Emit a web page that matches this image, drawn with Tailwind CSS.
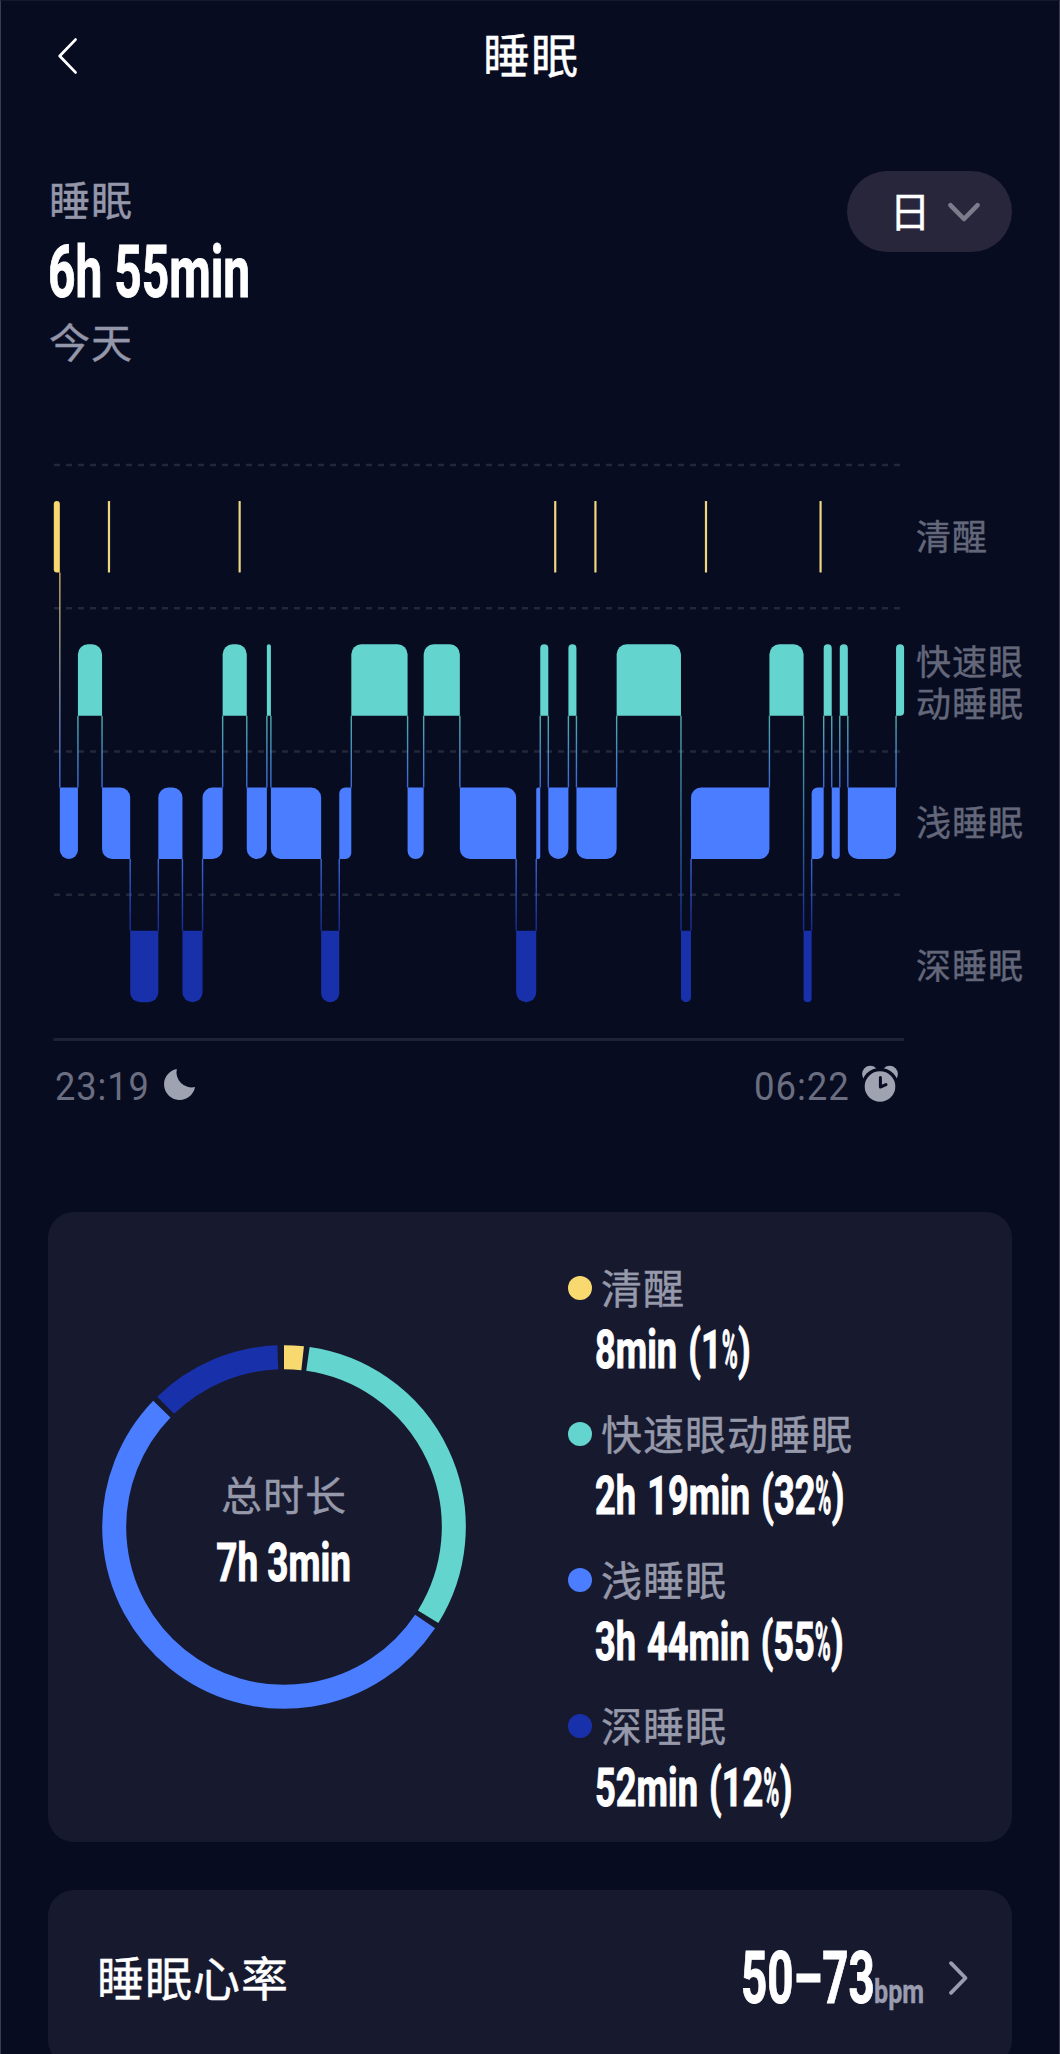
<!DOCTYPE html>
<html lang="zh-CN">
<head>
<meta charset="utf-8">
<title>睡眠</title>
<script src="https://cdn.jsdelivr.net/npm/@tailwindcss/browser@4"></script>
</head>
<body class="bg-[#070c21]">
<div class="w-[1060px] h-[2054px] overflow-hidden flex flex-col bg-[#070c21] border-x border-t border-x-[#3a3d50] border-t-[#141a2e] text-white font-['Noto_Sans_CJK_SC',sans-serif] [-webkit-text-stroke:0.4px]">

  <header class="h-[110px] shrink-0 grid grid-cols-[1fr_auto_1fr] items-center pl-[54px] pr-[52px]">
    <svg class="w-[26px] h-[42px]" viewBox="0 0 26 42" fill="none" stroke="#fff" stroke-width="2.8" stroke-linecap="round" stroke-linejoin="round"><path d="M20.5 4.6 4.7 21 20.5 37.4"/></svg>
    <h1 class="mb-[6px] text-[47px] leading-[60px] tracking-[1px]">睡眠</h1>
  </header>

  <section class="mt-[58px] pl-[48px] pr-[47px] h-[202px] shrink-0 flex justify-between items-start">
    <div class="flex flex-col">
      <div class="h-[60px] text-[41px] leading-[58px] tracking-[1px] text-[#9497a9]">睡眠</div>
      <div class="-ml-[1px] h-[82px] text-[71.5px] leading-[88px] font-bold font-['Roboto',sans-serif] whitespace-nowrap origin-left scale-x-[0.67] [-webkit-text-stroke:1px]">6h 55min</div>
      <div class="h-[60px] text-[41px] leading-[59px] tracking-[1px] text-[#9497a9]">今天</div>
    </div>
    <button class="mt-[2px] w-[165px] h-[81px] rounded-full bg-[#27263a] flex items-center pl-[42px] gap-[16px]">
      <span class="mb-[5px] text-[41px] leading-[60px] w-[42px]">日</span>
      <svg class="w-[34px] h-[22px]" viewBox="0 0 34 22" fill="none" stroke="#7d7c8c" stroke-width="4.6" stroke-linecap="round" stroke-linejoin="round"><path d="M3.4 4.2 17 18 30.6 4.2"/></svg>
    </button>
  </section>

  <section class="mt-[89px] pl-[52px] flex h-[582px] shrink-0">
    <svg id="stages" class="w-[852px] h-[582px] shrink-0" viewBox="0 0 852 582"></svg>
    <div class="ml-[11px] mt-[3px] h-[573px] grid grid-rows-4 items-center text-[35px] leading-[42px] tracking-[1px] text-[#636779]">
      <div>清醒</div>
      <div class="mt-[6px]">快速眼<br>动睡眠</div>
      <div>浅睡眠</div>
      <div>深睡眠</div>
    </div>
  </section>

  <section class="mt-[18px] ml-[54px] w-[845px] h-[52px] shrink-0 flex items-center justify-between text-[38.5px] leading-[52px] tracking-[1px] text-[#6b6e80] font-['Roboto',sans-serif] [-webkit-text-stroke:0px]">
    <div class="flex items-center gap-[13px]">
      <span class="w-[95px] pt-[2px] origin-left scale-x-[0.94]">23:19</span>
      <svg class="mb-[2px] w-[34px] h-[34px]" viewBox="0 0 34 34" fill="#9fa2b1"><path d="M13.8 1A15.6 15.6 0 1 0 32 19 15.2 15.2 0 0 1 13.8 1Z"/></svg>
    </div>
    <div class="flex items-center gap-[5px]">
      <span class="w-[101px] pt-[2px] origin-left scale-x-[0.95]">06:22</span>
      <svg class="mb-[4px] w-[40px] h-[40px]" viewBox="0 0 40 40">
        <circle cx="10.3" cy="10" r="8.2" fill="#9fa2b1"/><circle cx="29.7" cy="10" r="8.2" fill="#9fa2b1"/>
        <circle cx="20" cy="22.5" r="18.6" fill="#070c21"/><circle cx="20" cy="22.5" r="15.3" fill="#9fa2b1"/>
        <path d="M20.4 13.5V23L26 20.6" fill="none" stroke="#070c21" stroke-width="3" stroke-linecap="round" stroke-linejoin="round"/>
      </svg>
    </div>
  </section>

  <section class="mt-[100px] ml-[47px] w-[964px] h-[630px] shrink-0 rounded-[26px] bg-[#171a2f] flex">
    <div class="w-[520px] grid place-items-start">
      <svg id="ring" class="col-start-1 row-start-1 ml-[52px] mt-[131px] w-[368px] h-[368px]" viewBox="-184 -184 368 368" fill="none" stroke-width="24"></svg>
      <div class="col-start-1 row-start-1 ml-[52px] mt-[253px] w-[368px] flex flex-col items-center">
        <div class="h-[60px] text-[41px] leading-[57px] tracking-[1px] text-[#9699aa]">总时长</div>
        <div class="mt-[6px] h-[60px] text-[53.5px] leading-[64px] font-bold font-['Roboto',sans-serif] whitespace-nowrap scale-x-[0.69] [-webkit-text-stroke:1px]">7h 3min</div>
      </div>
    </div>
    <ul class="pt-[46px]">
      <li class="h-[146px]">
        <div class="flex items-center gap-[9px]"><i class="size-[24px] rounded-full bg-[#f8d970]"></i><span class="h-[60px] text-[41px] leading-[57px] tracking-[1px] text-[#9699aa]">清醒</span></div>
        <div class="ml-[27px] h-[60px] text-[53.5px] leading-[64px] font-bold font-['Roboto',sans-serif] whitespace-nowrap w-[200px] origin-left scale-x-[0.678] [word-spacing:3px] [-webkit-text-stroke:1px]">8min (1<span class="inline-block origin-left scale-x-[0.6] -mr-[15.5px]">%</span>)</div>
      </li>
      <li class="h-[146px]">
        <div class="flex items-center gap-[9px]"><i class="size-[24px] rounded-full bg-[#63d5ce]"></i><span class="h-[60px] text-[41px] leading-[57px] tracking-[1px] text-[#9699aa]">快速眼动睡眠</span></div>
        <div class="ml-[27px] h-[60px] text-[53.5px] leading-[64px] font-bold font-['Roboto',sans-serif] whitespace-nowrap w-[200px] origin-left scale-x-[0.678] [word-spacing:3px] [-webkit-text-stroke:1px]">2h 19min (32<span class="inline-block origin-left scale-x-[0.6] -mr-[15.5px]">%</span>)</div>
      </li>
      <li class="h-[146px]">
        <div class="flex items-center gap-[9px]"><i class="size-[24px] rounded-full bg-[#4a7dff]"></i><span class="h-[60px] text-[41px] leading-[57px] tracking-[1px] text-[#9699aa]">浅睡眠</span></div>
        <div class="ml-[27px] h-[60px] text-[53.5px] leading-[64px] font-bold font-['Roboto',sans-serif] whitespace-nowrap w-[200px] origin-left scale-x-[0.676] [word-spacing:3px] [-webkit-text-stroke:1px]">3h 44min (55<span class="inline-block origin-left scale-x-[0.6] -mr-[15.5px]">%</span>)</div>
      </li>
      <li class="h-[146px]">
        <div class="flex items-center gap-[9px]"><i class="size-[24px] rounded-full bg-[#1831ab]"></i><span class="h-[60px] text-[41px] leading-[57px] tracking-[1px] text-[#9699aa]">深睡眠</span></div>
        <div class="ml-[27px] h-[60px] text-[53.5px] leading-[64px] font-bold font-['Roboto',sans-serif] whitespace-nowrap w-[200px] origin-left scale-x-[0.678] [word-spacing:3px] [-webkit-text-stroke:1px]">52min (12<span class="inline-block origin-left scale-x-[0.6] -mr-[15.5px]">%</span>)</div>
      </li>
    </ul>
  </section>

  <section class="mt-[48px] ml-[47px] w-[964px] h-[176px] shrink-0 rounded-[26px] bg-[#171a2f] flex items-center pl-[49px]">
    <div class="mb-[4px] shrink-0 text-[47px] leading-[60px] tracking-[1px] w-[644px]">睡眠心率</div>
    <div class="mt-[2px] shrink-0 w-[133px] text-[71.5px] leading-[84px] font-bold font-['Roboto',sans-serif] whitespace-nowrap [-webkit-text-stroke:1px]"><div class="origin-left scale-x-[0.64]">50–73</div></div>
    <div class="mt-[26px] shrink-0 w-[73px] text-[34px] leading-[40px] font-bold text-[#9a9db0] font-['Roboto',sans-serif]"><div class="origin-left scale-x-[0.74]">bpm</div></div>
    <svg class="shrink-0 w-[24px] h-[38px]" viewBox="0 0 24 38" fill="none" stroke="#9a9db0" stroke-width="3.8" stroke-linecap="round" stroke-linejoin="round"><path d="M4 4.2 18.5 19 4 33.8"/></svg>
  </section>
</div>

<script>
  const NS = 'http://www.w3.org/2000/svg';
  const add = (parent, tag, attrs) => {
    const el = document.createElementNS(NS, tag);
    for (const k in attrs) el.setAttribute(k, attrs[k]);
    parent.appendChild(el);
    return el;
  };

  // Sleep stages: 0 awake, 1 REM, 2 light, 3 deep; durations in minutes
  const colors = ['#f8d970', '#63d5ce', '#4a7dff', '#1831ab'];
  const night = [[0,3],[2,9],[1,12],[2,14],[3,14],[2,12],[3,10],[2,10],[1,12],[2,10],[1,2],[2,25],[3,9],[2,6],[1,28],[2,8],[1,18],[2,28],[3,10],[2,2],[1,4],[2,10],[1,4],[2,20],[1,32],[3,5],[2,39],[1,17],[3,4],[2,6],[1,4],[2,4],[1,4],[2,24],[1,4]];
  const wakeups = [27, 92, 249, 269, 324, 381];
  const svg = document.getElementById('stages');
  const perMin = 850.3 / 423, pitch = 143.25, barH = 71.5;
  const rowTop = s => 41 + s * pitch;

  for (let i = 0; i < 4; i++)
    add(svg, 'line', {x1: 1, x2: 850, y1: 5 + i * pitch, y2: 5 + i * pitch, stroke: '#232738', 'stroke-width': 2.4, 'stroke-dasharray': '6 6'});
  add(svg, 'rect', {x: 0.5, y: 578, width: 850.5, height: 3, fill: '#1f2337'});

  const defs = add(svg, 'defs', {});
  let x = 0.8;
  night.forEach(([s, min], i) => {
    const w = min * perMin, y = rowTop(s), r = Math.min(10, w / 2);
    const prev = i ? night[i - 1][0] : s, next = i < night.length - 1 ? night[i + 1][0] : s;
    const tl = prev < s ? 0 : r, bl = prev > s ? 0 : r, tr = next < s ? 0 : r, br = next > s ? 0 : r;
    add(svg, 'path', {fill: colors[s], d: `M${x + tl} ${y}H${x + w - tr}a${tr} ${tr} 0 0 1 ${tr} ${tr}V${y + barH - br}a${br} ${br} 0 0 1 ${-br} ${br}H${x + bl}a${bl} ${bl} 0 0 1 ${-bl} ${-bl}V${y + tl}a${tl} ${tl} 0 0 1 ${tl} ${-tl}Z`});
    if (i) {
      const a = Math.min(prev, s), b = Math.max(prev, s);
      if (!document.getElementById(`g${a}${b}`)) {
        const g = add(defs, 'linearGradient', {id: `g${a}${b}`, gradientUnits: 'userSpaceOnUse', x1: 0, x2: 0, y1: rowTop(a) + barH, y2: rowTop(b)});
        add(g, 'stop', {offset: 0, 'stop-color': colors[a]});
        add(g, 'stop', {offset: 1, 'stop-color': colors[b]});
      }
      add(svg, 'rect', {x: x - 0.7, y: rowTop(a) + barH, width: 1.4, height: rowTop(b) - rowTop(a) - barH, fill: `url(#g${a}${b})`, opacity: 0.8});
    }
    x += w;
  });
  wakeups.forEach(m => add(svg, 'rect', {x: 0.6 + m * perMin, y: rowTop(0), width: 2.2, height: barH, rx: 0.6, fill: '#eed683'}));

  // Ring segments: start and end angle in degrees, clockwise from the top
  const ring = document.getElementById('ring');
  [[0, 6.3], [8.1, 121.9], [123.8, 314], [315.8, 357.9]].forEach(([a, b], s) => {
    const R = 169.8, p = d => `${R * Math.sin(d * Math.PI / 180)} ${-R * Math.cos(d * Math.PI / 180)}`;
    add(ring, 'path', {stroke: colors[s], d: `M${p(a)}A${R} ${R} 0 ${b - a > 180 ? 1 : 0} 1 ${p(b)}`});
  });
</script>
</body>
</html>
